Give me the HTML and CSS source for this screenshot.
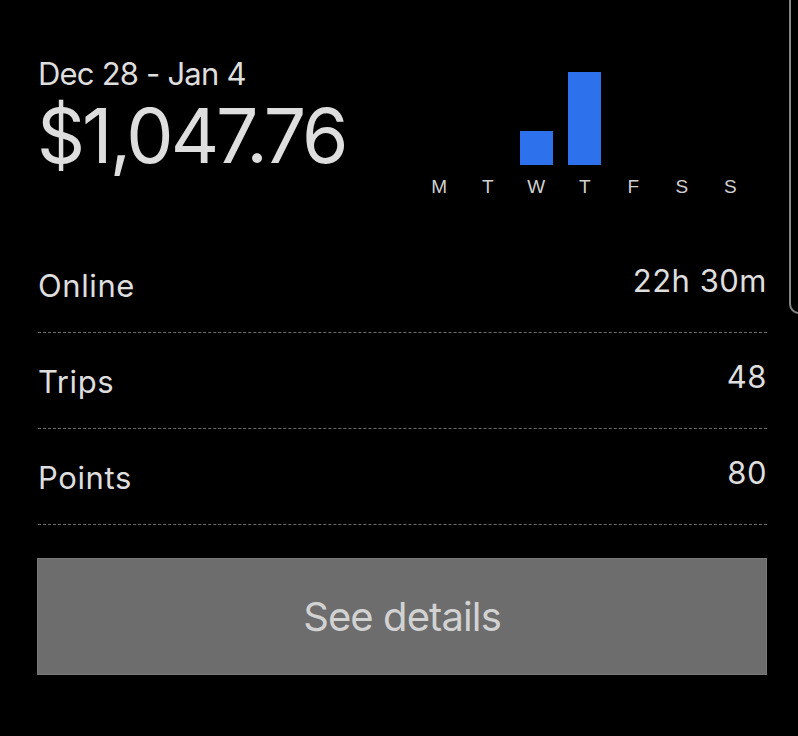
FILE: index.html
```html
<!DOCTYPE html>
<html>
<head>
<meta charset="utf-8">
<link rel="stylesheet" href="styles.css">
</head>
<body>
<div class="screen">
  <div class="edge"></div>
  <section class="card">
    <div class="header">
      <div class="summary">
        <div class="range">Dec 28 - Jan 4</div>
        <div class="total">$1,047.76</div>
      </div>
      <div class="chart">
        <div class="bars">
          <div class="col"></div>
          <div class="col"></div>
          <div class="col"><div class="bar" style="height:34px"></div></div>
          <div class="col"><div class="bar" style="height:93px"></div></div>
          <div class="col"></div>
          <div class="col"></div>
          <div class="col"></div>
        </div>
        <div class="days">
          <span>M</span><span>T</span><span>W</span><span>T</span><span>F</span><span>S</span><span>S</span>
        </div>
      </div>
    </div>
    <div class="stats">
      <div class="row"><span class="label">Online</span><span class="value">22h 30m</span></div>
      <div class="row"><span class="label">Trips</span><span class="value">48</span></div>
      <div class="row"><span class="label">Points</span><span class="value">80</span></div>
    </div>
    <button class="details">See details</button>
  </section>
</div>
</body>
</html>
```
FILE: styles.css
```css
html, body {
  margin: 0;
  padding: 0;
  background: #000;
}
.screen {
  position: relative;
  width: 798px;
  height: 736px;
  overflow: hidden;
  background: #000;
  font-family: Inter, "Open Sans", sans-serif;
  color: #dcdcdc;
}
.edge {
  position: absolute;
  left: 789px;
  top: -10px;
  width: 40px;
  height: 322px;
  border-left: 2px solid #868686;
  border-bottom: 2px solid #868686;
  border-bottom-left-radius: 10px;
}
.card {
  padding: 0 31px 0 38px;
}
.header {
  display: flex;
  justify-content: space-between;
  align-items: flex-start;
  height: 237px;
}
.summary {
  padding-top: 56px;
}
.range {
  font-size: 31px;
  line-height: 36px;
  letter-spacing: -0.8px;
  color: #dedede;
}
.total {
  font-size: 75px;
  line-height: 76px;
  letter-spacing: -3px;
  color: #dedede;
  margin-top: 6px;
  margin-left: -1px;
}
.chart {
  padding-top: 72px;
  width: 340px;
  margin-right: 12px;
}
.bars {
  display: grid;
  grid-template-columns: repeat(7, 48.5px);
  height: 93px;
  align-items: end;
}
.col {
  display: flex;
  justify-content: center;
  align-items: flex-end;
  height: 100%;
}
.bar {
  width: 33px;
  background: #2e71ec;
}
.days {
  display: grid;
  grid-template-columns: repeat(7, 48.5px);
  margin-top: 11px;
  font-family: "Liberation Sans", Arial, sans-serif;
  font-size: 19px;
  line-height: 21px;
  color: #d0d0d0;
}
.days span {
  text-align: center;
}
.stats {
  display: flex;
  flex-direction: column;
}
.row {
  display: flex;
  justify-content: space-between;
  align-items: flex-start;
  height: 95px;
  border-bottom: 1px dashed #6c6c6c;
}
.label {
  font-size: 31px;
  line-height: 38px;
  letter-spacing: 0.6px;
  color: #dedede;
  margin-top: 30px;
}
.value {
  font-size: 31px;
  line-height: 38px;
  letter-spacing: 0.5px;
  color: #dedede;
  margin-top: 25px;
}
.details {
  display: block;
  width: 730px;
  height: 117px;
  margin: 33px 0 0 -1px;
  background: #6d6d6d;
  border: 1px solid #7a7a7a;
  color: #d2d2d2;
  font-family: Inter, "Open Sans", sans-serif;
  font-size: 40px;
  letter-spacing: -0.9px;
  padding: 0;
}
```
